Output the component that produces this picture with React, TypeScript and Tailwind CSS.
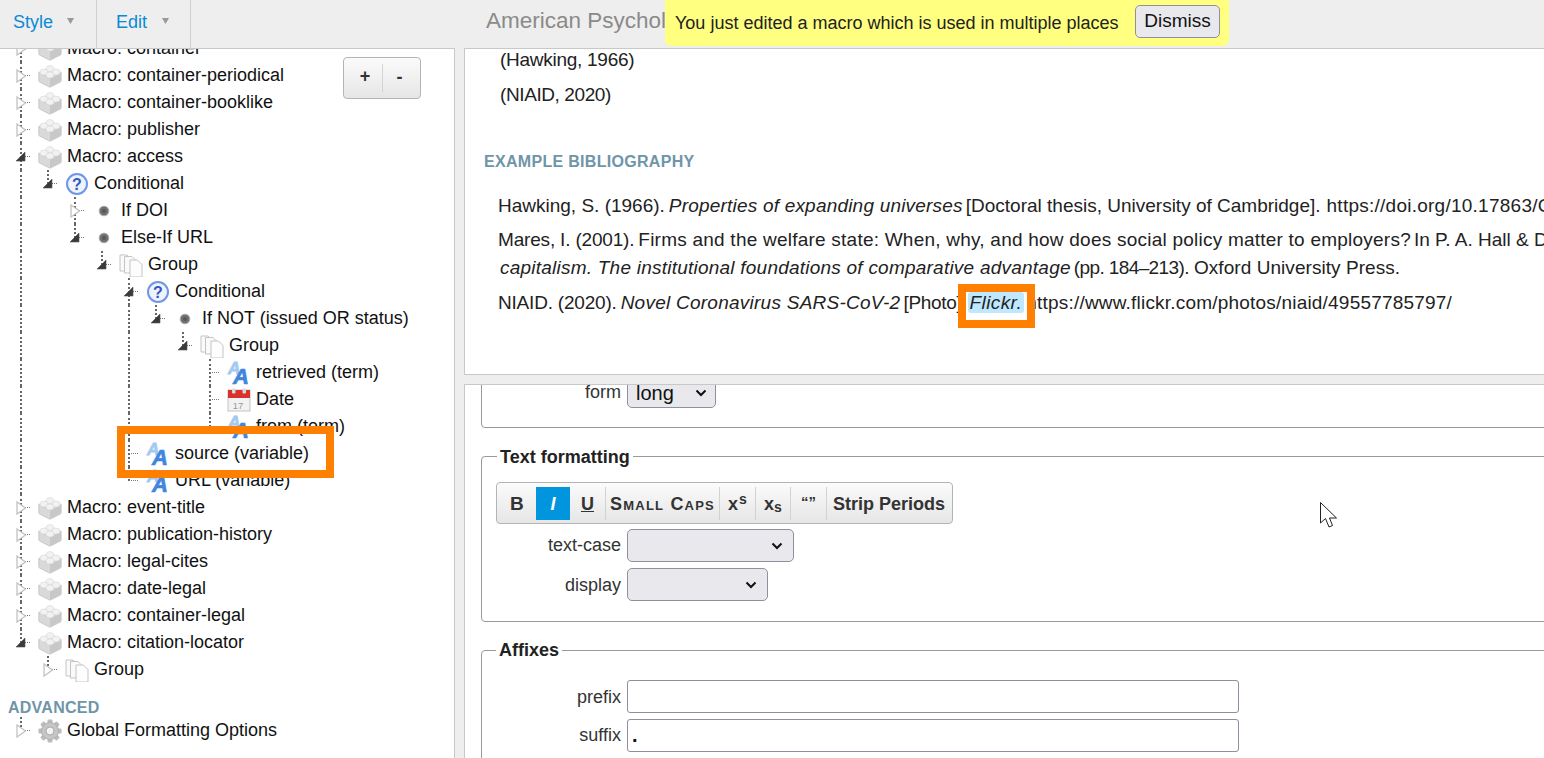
import React from "react";

function Brick() {
  return (
    <svg width="24" height="24" viewBox="0 0 24 24" className="block">
      <path d="M0.8 8.5 L12 14 L23.2 8.5 V16.8 Q23.2 17.6 22.4 18 L12.6 23 Q12 23.3 11.4 23 L1.6 18 Q0.8 17.6 0.8 16.8 Z" fill="#d9d9d9" stroke="#c2c2c2" strokeWidth="0.8" />
      <path d="M12 14.5 L23 9 V17 L12 22.8 Z" fill="#c8c8c8" />
      <path d="M0.8 8.5 L12 3 L23.2 8.5 L12 14 Z" fill="#ebebeb" stroke="#cdcdcd" strokeWidth="0.8" />
      <ellipse cx="12" cy="4.6" rx="3.9" ry="3" fill="#f2f2f2" stroke="#d6d6d6" strokeWidth="0.6" />
      <ellipse cx="6" cy="8" rx="3.9" ry="3" fill="#f2f2f2" stroke="#d6d6d6" strokeWidth="0.6" />
      <ellipse cx="18" cy="8" rx="3.9" ry="3" fill="#f2f2f2" stroke="#d6d6d6" strokeWidth="0.6" />
      <ellipse cx="12" cy="11" rx="3.9" ry="3" fill="#f2f2f2" stroke="#d6d6d6" strokeWidth="0.6" />
    </svg>
  );
}
function Question() {
  return (
    <svg width="24" height="24" viewBox="0 0 24 24" className="block">
      <circle cx="12" cy="12" r="10" fill="#eef3fd" stroke="#6f95ea" strokeWidth="2" />
      <text x="12" y="17.5" textAnchor="middle" fontSize="16" fontWeight="700" fontFamily="Liberation Sans" fill="#3458b8">?</text>
    </svg>
  );
}
function Dot() {
  return (
    <svg width="24" height="24" viewBox="0 0 24 24" className="block">
      <circle cx="12" cy="12" r="4.8" fill="#707070" stroke="#ababab" strokeWidth="1" />
      <circle cx="12" cy="12" r="2" fill="#585858" />
    </svg>
  );
}
function Pages() {
  return (
    <svg width="24" height="24" viewBox="0 0 24 24" className="block">
      <path d="M1 2 H8 L11 5 V18 H1 Z" fill="#fafafa" stroke="#c4c4c4" />
      <path d="M5.5 3.5 H13 L16 6.5 V20 H5.5 Z" fill="#fafafa" stroke="#c4c4c4" />
      <path d="M11 7 H18.5 L23 11.5 V24 H11 Z" fill="#fdfdfd" stroke="#c4c4c4" />
    </svg>
  );
}
function AA() {
  return (
    <svg width="24" height="24" viewBox="0 0 24 24" className="block">
      <text x="1" y="12.5" fontSize="17" fontWeight="700" fontStyle="italic" fontFamily="Liberation Sans" fill="#a3c9f1" stroke="#a3c9f1" strokeWidth="0.8">A</text>
      <text x="6" y="23" fontSize="22" fontWeight="700" fontStyle="italic" fontFamily="Liberation Sans" fill="#3f86de" stroke="#3f86de" strokeWidth="0.7">A</text>
    </svg>
  );
}
function Cal() {
  return (
    <svg width="24" height="24" viewBox="0 0 24 24" className="block">
      <rect x="1" y="2" width="22" height="21" fill="#f2f2f2" stroke="#c4c4c4" />
      <rect x="1" y="2" width="22" height="8" fill="#d9312b" />
      <rect x="5" y="0.5" width="3.5" height="5" rx="1" fill="#d8d8d8" />
      <rect x="15.5" y="0.5" width="3.5" height="5" rx="1" fill="#d8d8d8" />
      <text x="11" y="20.5" textAnchor="middle" fontSize="9.5" fontFamily="Liberation Sans" fill="#9a9a9a">17</text>
    </svg>
  );
}
function Gear() {
  const teeth = [0, 45, 90, 135, 180, 225, 270, 315];
  return (
    <svg width="24" height="24" viewBox="0 0 24 24" className="block">
      {teeth.map((a) => (
        <rect key={a} x="9.5" y="0.5" width="5" height="6" rx="1" fill="#bcbcbc" transform={`rotate(${a} 12 12)`} />
      ))}
      <circle cx="12" cy="12" r="8.5" fill="#c6c6c6" stroke="#aaa" strokeWidth="0.8" />
      <circle cx="12" cy="12" r="4" fill="#f4f4f4" stroke="#9a9a9a" strokeWidth="0.8" />
    </svg>
  );
}

const ICONS: Record<string, () => React.ReactElement> = { Brick, Question, Dot, Pages, AA, Cal, Gear };

type RowDef = {
  d: number;
  icon: string;
  label: string;
  t?: "open" | "closed";
  g?: number[];
  last?: boolean;
};

const W = 27;

function Guide({ d, half }: { d: number; half?: boolean }) {
  return (
    <span
      className="absolute top-0 border-l-2 border-dotted border-[#666]"
      style={{ left: 20 + W * d, height: half ? 14 : 27 }}
    />
  );
}

function Toggle({ d, t }: { d: number; t?: "open" | "closed" }) {
  return (
    <>
      <span
        className="absolute top-[13px] border-t border-dotted border-[#777] w-[9px]"
        style={{ left: 21 + W * d }}
      />
      {t && (
        <span className="absolute top-[7px]" style={{ left: 15 + W * d }}>
          {t === "open" ? (
            <svg width="12" height="12" viewBox="0 0 12 12" className="block">
              <path d="M1 11 L10 2 V11 Z" fill="#3a3a3a" stroke="#555" strokeWidth=".6" />
            </svg>
          ) : (
            <svg width="12" height="14" viewBox="0 0 12 14" className="block">
              <path d="M2 1 L10.5 7 L2 13 Z" fill="#fff" stroke="#c2c2c2" strokeWidth="1.3" />
            </svg>
          )}
        </span>
      )}
    </>
  );
}

function Row({ d, icon, label, t, g = [], last }: RowDef) {
  const Icon = ICONS[icon];
  return (
    <div className="relative h-[27px] flex items-center">
      {g.map((x) => (
        <Guide key={x} d={x} />
      ))}
      <Guide d={d} half={last} />
      <Toggle d={d} t={t} />
      <span className="shrink-0 w-[24px] h-[24px]" style={{ marginLeft: 38 + W * d }}>
        <Icon />
      </span>
      <span className="ml-[5px] whitespace-nowrap text-[18px] leading-[27px] text-[#111]">{label}</span>
    </div>
  );
}

const TREE: RowDef[] = [
  { d: 0, icon: "Brick", label: "Macro: container", t: "closed" },
  { d: 0, icon: "Brick", label: "Macro: container-periodical", t: "closed" },
  { d: 0, icon: "Brick", label: "Macro: container-booklike", t: "closed" },
  { d: 0, icon: "Brick", label: "Macro: publisher", t: "closed" },
  { d: 0, icon: "Brick", label: "Macro: access", t: "open" },
  { d: 1, icon: "Question", label: "Conditional", t: "open", g: [0], last: true },
  { d: 2, icon: "Dot", label: "If DOI", t: "closed", g: [0] },
  { d: 2, icon: "Dot", label: "Else-If URL", t: "open", g: [0], last: true },
  { d: 3, icon: "Pages", label: "Group", t: "open", g: [0], last: true },
  { d: 4, icon: "Question", label: "Conditional", t: "open", g: [0] },
  { d: 5, icon: "Dot", label: "If NOT (issued OR status)", t: "open", g: [0, 4], last: true },
  { d: 6, icon: "Pages", label: "Group", t: "open", g: [0, 4], last: true },
  { d: 7, icon: "AA", label: "retrieved (term)", g: [0, 4] },
  { d: 7, icon: "Cal", label: "Date", g: [0, 4] },
  { d: 7, icon: "AA", label: "from (term)", g: [0, 4], last: true },
  { d: 4, icon: "AA", label: "source (variable)", g: [0] },
  { d: 4, icon: "AA", label: "URL (variable)", g: [0], last: true },
  { d: 0, icon: "Brick", label: "Macro: event-title", t: "closed" },
  { d: 0, icon: "Brick", label: "Macro: publication-history", t: "closed" },
  { d: 0, icon: "Brick", label: "Macro: legal-cites", t: "closed" },
  { d: 0, icon: "Brick", label: "Macro: date-legal", t: "closed" },
  { d: 0, icon: "Brick", label: "Macro: container-legal", t: "closed" },
  { d: 0, icon: "Brick", label: "Macro: citation-locator", t: "open", last: true },
  { d: 1, icon: "Pages", label: "Group", t: "closed", last: true },
];

function Chevron() {
  return (
    <svg width="12" height="8" viewBox="0 0 12 8" className="block">
      <path d="M1.5 1.5 L6 6 L10.5 1.5" fill="none" stroke="#111" strokeWidth="2" />
    </svg>
  );
}

function Caret() {
  return (
    <svg width="7" height="6" viewBox="0 0 7 6" className="block">
      <path d="M0 0 H7 L3.5 6 Z" fill="#999" />
    </svg>
  );
}

function SelectBox({ w, h, value, chevronRight }: { w: string; h: string; value?: string; chevronRight: string }) {
  return (
    <div className={`${w} ${h} flex items-center justify-between bg-[#e9e9ed] border border-[#8f8f9d] rounded-[5px] pl-[8px] ${chevronRight} text-[20px] text-[#111]`}>
      <span>{value ?? ""}</span>
      <Chevron />
    </div>
  );
}

function ToolBtn({ w, children, active, sep = true }: { w: string; children: React.ReactNode; active?: boolean; sep?: boolean }) {
  return (
    <div
      className={`${w} h-[33px] flex items-center justify-center pt-[2px] font-bold text-[18px] ${
        active ? "bg-[#0095dd] text-white" : "text-[#333]"
      } ${sep ? "border-r border-[#d2d2d2]" : ""}`}
    >
      {children}
    </div>
  );
}

export default function App() {
  return (
    <div className="relative w-[1544px] h-[758px] overflow-hidden bg-[#eeeeee] flex flex-col font-['Liberation_Sans',Arial,sans-serif]">
      {/* Top bar */}
      <header className="h-[48px] shrink-0 bg-[#eeeeee] flex relative">
        <div className="w-[97px] border-r border-[#d0d0d0] flex items-center pl-[13px] pb-[4px]">
          <span className="text-[18px] text-[#0a8ad6]">Style</span>
          <span className="ml-[14px] -mt-[2px]"><Caret /></span>
        </div>
        <div className="w-[94px] border-r border-[#d0d0d0] flex items-center pl-[19px] pb-[4px]">
          <span className="text-[18px] text-[#0a8ad6]">Edit</span>
          <span className="ml-[15px] -mt-[2px]"><Caret /></span>
        </div>
        <div className="ml-[295px] pt-[7px] text-[22.5px] leading-[28px] text-[#8a8a8a] whitespace-nowrap">
          American Psychological Association 7th edition
        </div>
      </header>

      <div className="flex flex-1 min-h-0">
        {/* Tree */}
        <aside className="relative w-[455px] shrink-0 bg-white border-r border-t border-[#c8c8c8] overflow-hidden">
          <div className="-mt-[14px]">
            {TREE.map((r, i) => (
              <Row key={i} {...r} />
            ))}
            <div className="mt-[15px] pl-[8px] text-[16px] leading-[20px] font-bold tracking-[0.25px] text-[#6f95a9]">ADVANCED</div>
            <div className="-mt-[1px]">
              <Row d={0} icon="Gear" label="Global Formatting Options" t="closed" last />
            </div>
          </div>
          <div className="absolute left-[343px] top-[8px] w-[78px] h-[42px] flex items-center rounded-[4px] border border-[#b4b4b4] bg-gradient-to-b from-[#fbfbfb] to-[#e6e6e6] font-bold text-[#333]">
            <div className="w-[39px] h-[28px] pl-[4px] pb-[3px] border-r border-[#d4d4d4] flex items-center justify-center text-[18px]">+</div>
            <div className="flex-1 pr-[4px] pb-[1px] flex items-center justify-center text-[18px]">-</div>
          </div>
        </aside>

        <div className="w-[9px] shrink-0 bg-[#eeeeee]" />

        {/* Right */}
        <main className="flex-1 min-w-0 flex flex-col">
          <section className="h-[327px] shrink-0 bg-white border-l border-t border-b border-[#c8c8c8] overflow-hidden text-[19px] text-[#222] whitespace-nowrap">
            <div className="pl-[35px] leading-[24px] -mt-[1px] tracking-[-0.27px]">(Hawking, 1966)</div>
            <div className="pl-[35px] leading-[24px] mt-[11px] tracking-[-0.4px]">(NIAID, 2020)</div>
            <div className="mt-[45px] pl-[19px] text-[16px] leading-[20px] font-bold tracking-[0.3px] text-[#6f95a9]">EXAMPLE BIBLIOGRAPHY</div>
            <div className="mt-[22px] pl-[33px] leading-[24px]">
              <span>Hawking, S. (1966).</span>
              <i className="ml-[4px] tracking-[0.2px]">Properties of expanding universes</i>
              <span className="ml-[3px]">[Doctoral thesis, University of Cambridge].</span>
              <span className="ml-[6px] tracking-[0.25px]">https://doi.org/10.17863/CAM.11283</span>
            </div>
            <div className="mt-[10px] pl-[33px] leading-[24px]">
              <span className="tracking-[-0.18px]">Mares, I. (2001).</span>
              <span className="ml-[4px] tracking-[0.23px]">Firms and the welfare state: When, why, and how does social policy matter to employers?</span>
              <span className="ml-[3px]">In P. A. Hall &amp; D. Soskice (Eds.), <i>Varieties of</i></span>
            </div>
            <div className="mt-[4px] pl-[35px] leading-[24px]">
              <i className="tracking-[0.23px]">capitalism. The institutional foundations of comparative advantage</i>
              <span className="ml-[3px] tracking-[-0.6px]">(pp. 184–213).</span>
              <span className="ml-[5px] tracking-[0.06px]">Oxford University Press.</span>
            </div>
            <div className="mt-[11px] pl-[33px] leading-[24px]">
              <span className="tracking-[-0.2px]">NIAID. (2020).</span>
              <i className="ml-[4px] tracking-[0.25px]">Novel Coronavirus SARS-CoV-2</i>
              <span className="ml-[3px] tracking-[-0.3px]">[Photo].</span>
              <i className="ml-[1px] inline-block leading-[21px] px-[2px] bg-[#bfe8ff] rounded-[3px] tracking-[0.4px]">Flickr.</i>
              <span className="ml-[2px] tracking-[0.2px]">https://www.flickr.com/photos/niaid/49557785797/</span>
            </div>
          </section>

          <div className="h-[9px] shrink-0 bg-[#eeeeee]" />

          <section className="flex-1 min-h-0 bg-white border-l border-t border-[#c8c8c8] overflow-hidden text-[18px] text-[#333]">
            <div className="pl-[16px] w-[1300px]">
              {/* clipped fieldset */}
              <div className="-mt-[30px] h-[73px] border border-[#9a9a9a] rounded-[4px] pt-[22px] flex">
                <div className="w-[145px] text-right pr-[6px] leading-[28px]">form</div>
                <SelectBox w="w-[89px]" h="h-[30px]" value="long" chevronRight="pr-[8px]" />
              </div>

              <fieldset className="mt-[18px] h-[176px] border border-[#9a9a9a] rounded-[4px] pb-0">
                <legend className="ml-[15px] px-[3px] text-[18px] leading-[20px] font-bold text-[#222]"><span className="relative top-[1px]">Text formatting</span></legend>
                <div className="ml-[14px] mt-[16px] w-[457px] h-[42px] flex items-center pl-[1px] rounded-[4px] border border-[#b4b4b4] bg-gradient-to-b from-[#fbfbfb] to-[#e6e6e6]">
                  <ToolBtn w="w-[38px]" sep={false}><span className="text-[19px] tracking-[0.5px]">B</span></ToolBtn>
                  <ToolBtn w="w-[34px]" active sep={false}><i>I</i></ToolBtn>
                  <ToolBtn w="w-[36px]"><u>U</u></ToolBtn>
                  <ToolBtn w="w-[114px]"><span className="[font-variant:small-caps] tracking-[1.2px] text-[18px]">Small Caps</span></ToolBtn>
                  <ToolBtn w="w-[36px]"><span className="relative">x<sup className="text-[14px] -top-[6px] ml-[1px]">s</sup></span></ToolBtn>
                  <ToolBtn w="w-[35px]"><span>x<sub className="text-[14px] -bottom-[2px]">s</sub></span></ToolBtn>
                  <ToolBtn w="w-[36px]"><span className="text-[15px] -mt-[3px]">“”</span></ToolBtn>
                  <ToolBtn w="w-[124px]" sep={false}>Strip Periods</ToolBtn>
                </div>
                <div className="mt-[5px] flex items-center">
                  <div className="w-[145px] text-right pr-[6px]">text-case</div>
                  <SelectBox w="w-[167px]" h="h-[33px]" chevronRight="pr-[10px]" />
                </div>
                <div className="mt-[6px] flex items-center">
                  <div className="w-[145px] text-right pr-[6px] pt-[1px]">display</div>
                  <SelectBox w="w-[141px]" h="h-[33px]" chevronRight="pr-[10px]" />
                </div>
              </fieldset>

              <fieldset className="mt-[18px] border border-[#9a9a9a] rounded-[4px] h-[200px]">
                <legend className="ml-[14px] px-[3px] text-[18px] leading-[20px] font-bold text-[#222]">Affixes</legend>
                <div className="mt-[20px] flex items-center">
                  <div className="w-[145px] text-right pr-[6px] pt-[2px]">prefix</div>
                  <input readOnly value="" className="w-[612px] h-[33px] bg-white border border-[#8f8f9d] rounded-[3px]" />
                </div>
                <div className="mt-[6px] flex items-center">
                  <div className="w-[145px] text-right pr-[6px]">suffix</div>
                  <input readOnly value="." className="w-[612px] h-[33px] bg-white border border-[#8f8f9d] rounded-[3px] px-[4px] text-[20px] text-[#111] font-bold" />
                </div>
              </fieldset>
            </div>
          </section>
        </main>
      </div>

      {/* Toast */}
      <div className="absolute left-[665px] top-0 w-[564px] h-[46px] bg-[#ffff80] rounded-b-[6px] flex items-center pl-[10px] text-[18px] text-[#222]">
        <span className="whitespace-nowrap">You just edited a macro which is used in multiple places</span>
        <div className="absolute left-[470px] top-[5px] w-[85px] h-[33px] bg-[#e9e9ed] border border-[#8f8f9d] rounded-[5px] flex items-center justify-center text-[#111] text-[19px]">Dismiss</div>
      </div>

      {/* Annotations */}
      <div className="absolute left-[117px] top-[426px] w-[217px] h-[52px] border-[8px] border-[#ff8000]" />
      <div className="absolute left-[958px] top-[284px] w-[77px] h-[44px] border-[8px] border-[#ff8000]" />

      {/* Cursor */}
      <svg className="absolute left-[1319px] top-[501px]" width="22" height="30" viewBox="0 0 22 30">
        <path d="M1.5 1.5 V22 L6.5 17.5 L10 26 L13.5 24.5 L10.5 17 H17.5 Z" fill="#fff" stroke="#222" strokeWidth="1" />
      </svg>
    </div>
  );
}
